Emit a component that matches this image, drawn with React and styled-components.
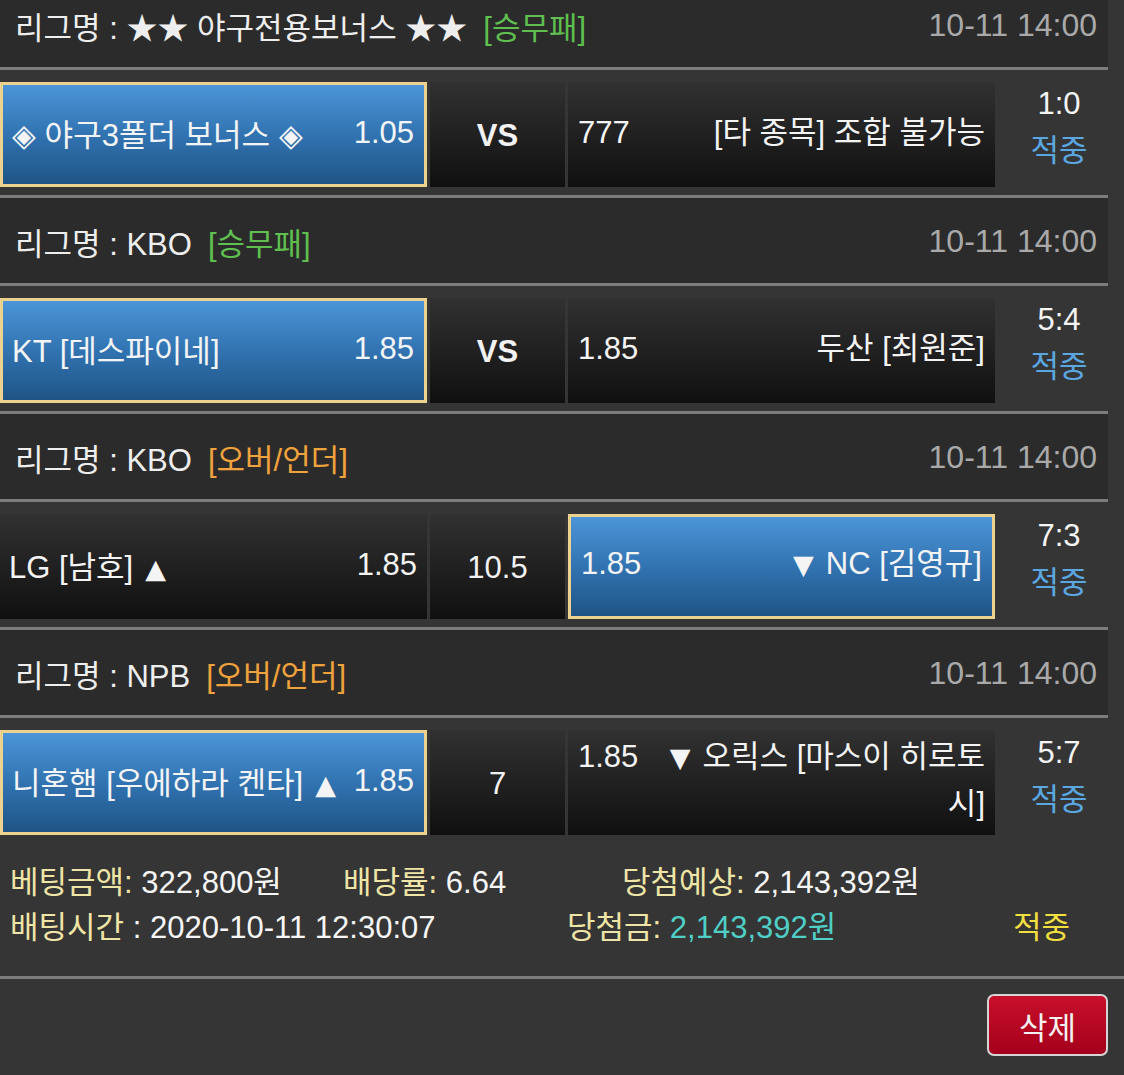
import styled, { createGlobalStyle } from "styled-components";

const GlobalStyle = createGlobalStyle`
  body {
    margin: 0;
    background: #353535;
    color: #f2f2f2;
    font-family: "Liberation Sans", "Noto Sans CJK KR", sans-serif;
    font-feature-settings: "palt";
  }
`;

const TAG_COLORS = {
  green: "#5fbf4f",
  orange: "#f0a23c",
};

// ou: over/under market, arrows drawn next to the names
const games = [
  {
    league: "★★ 야구전용보너스 ★★",
    tag: "승무패",
    tagColor: "green",
    time: "10-11 14:00",
    home: "◈ 야구3폴더 보너스 ◈",
    homeOdds: "1.05",
    mid: "VS",
    away: "[타 종목] 조합 불가능",
    awayOdds: "777",
    pick: "home",
    score: "1:0",
  },
  {
    league: "KBO",
    tag: "승무패",
    tagColor: "green",
    time: "10-11 14:00",
    home: "KT [데스파이네]",
    homeOdds: "1.85",
    mid: "VS",
    away: "두산 [최원준]",
    awayOdds: "1.85",
    pick: "home",
    score: "5:4",
  },
  {
    league: "KBO",
    tag: "오버/언더",
    tagColor: "orange",
    time: "10-11 14:00",
    home: "LG [남호]",
    homeOdds: "1.85",
    mid: "10.5",
    away: "NC [김영규]",
    awayOdds: "1.85",
    pick: "away",
    score: "7:3",
    ou: true,
  },
  {
    league: "NPB",
    tag: "오버/언더",
    tagColor: "orange",
    time: "10-11 14:00",
    home: "니혼햄 [우에하라 켄타]",
    homeOdds: "1.85",
    mid: "7",
    away: "오릭스 [마스이 히로토 시]",
    awayOdds: "1.85",
    pick: "home",
    score: "5:7",
    ou: true,
  },
];

const BetSlip = () => {
  return (
    <Wrapper>
      <GlobalStyle />
      <GameList>
        {games.map((game, i) => (
          <section key={i}>
            <LeagueBar>
              <span>
                리그명 : {game.league}
                <Tag $color={TAG_COLORS[game.tagColor]}>[{game.tag}]</Tag>
              </span>
              <Time>{game.time}</Time>
            </LeagueBar>
            <MatchRow $last={i === games.length - 1}>
              <HomeCell $picked={game.pick === "home"}>
                <span>
                  {game.home}
                  {game.ou && <Arrow $after>▲</Arrow>}
                </span>
                <span>{game.homeOdds}</span>
              </HomeCell>
              <MidCell $bold={game.mid === "VS"}>{game.mid}</MidCell>
              <AwayCell $picked={game.pick === "away"}>
                <AwayText>
                  <AwayOdds>{game.awayOdds}</AwayOdds>
                  {game.ou && <Arrow>▼</Arrow>}
                  {game.away}
                </AwayText>
              </AwayCell>
              <Score>
                <span>{game.score}</span>
                <Hit>적중</Hit>
              </Score>
            </MatchRow>
          </section>
        ))}
      </GameList>

      <Summary>
        <SummaryRow $cols="333px 279px 1fr">
          <span>
            <Label>베팅금액:</Label> 322,800원
          </span>
          <span>
            <Label>배당률:</Label> 6.64
          </span>
          <span>
            <Label>당첨예상:</Label> 2,143,392원
          </span>
        </SummaryRow>
        <SummaryRow $cols="557px 446px 1fr">
          <span>
            <Label>배팅시간</Label> : 2020-10-11 12:30:07
          </span>
          <span>
            <Label>당첨금:</Label> <Prize>2,143,392원</Prize>
          </span>
          <Result>적중</Result>
        </SummaryRow>
      </Summary>

      <Actions>
        <DeleteButton>삭제</DeleteButton>
      </Actions>
    </Wrapper>
  );
};

const Wrapper = styled.div`
  width: 1124px;
  overflow: hidden;
  font-size: 31px;
`;

const GameList = styled.div`
  width: 1108px;
  margin-top: -18px;
`;

const LeagueBar = styled.div`
  display: flex;
  align-items: center;
  justify-content: space-between;
  height: 88px;
  padding: 2px 11px 0 15px;
  box-sizing: border-box;
  background: #2b2b2b;
  border-bottom: 3px solid #7c7c7c;
  color: #eeeeee;
`;

const Tag = styled.span`
  margin-left: 16px;
  color: ${(p) => p.$color};
`;

const Time = styled.span`
  color: #a9a9a9;
  font-size: 32px;
`;

const MatchRow = styled.div`
  display: flex;
  gap: 3px;
  height: 128px;
  box-sizing: border-box;
  padding: 12px 0 8px;
  border-bottom: ${(p) => (p.$last ? "none" : "3px solid #7c7c7c")};
`;

const cellSkin = (p) =>
  p.$picked
    ? `background: linear-gradient(#4c95d8, #2f70ad 55%, #1f5485);
       border: 3px solid #ecd28e;`
    : `background: linear-gradient(#313131, #101010);`;

const HomeCell = styled.div`
  width: 427px;
  height: 105px;
  box-sizing: border-box;
  display: flex;
  align-items: center;
  justify-content: space-between;
  gap: 6px;
  padding: 0 10px 4px ${(p) => (p.$picked ? 9 : 9)}px;
  white-space: nowrap;
  color: #f4f4f4;
  ${cellSkin}
`;

const AwayCell = styled.div`
  width: 427px;
  height: 105px;
  box-sizing: border-box;
  display: flex;
  align-items: center;
  padding: 0 10px 4px;
  text-align: right;
  line-height: 46px;
  word-break: keep-all;
  color: #f4f4f4;
  ${cellSkin}
`;

const AwayText = styled.div`
  width: 100%;
`;

const AwayOdds = styled.span`
  float: left;
  margin-right: 12px;
`;

const Arrow = styled.span`
  font-family: "DejaVu Sans", sans-serif;
  font-size: 27px;
  margin: ${(p) => (p.$after ? "0 0 0 12px" : "0 12px 0 0")};
`;

const MidCell = styled.div`
  width: 135px;
  height: 105px;
  display: flex;
  align-items: center;
  justify-content: center;
  background: linear-gradient(#313131, #101010);
  font-weight: ${(p) => (p.$bold ? 700 : 400)};
  padding-top: 2px;
  box-sizing: border-box;
`;

const Score = styled.div`
  flex: 1;
  display: flex;
  flex-direction: column;
  align-items: center;
  justify-content: center;
  padding: 0 0 16px 12px;
  line-height: 47px;
  color: #f4f4f4;
`;

const Hit = styled.span`
  color: #5aa7e2;
`;

const Summary = styled.div`
  padding: 14px 0 26px;
  border-bottom: 3px solid #7c7c7c;
`;

const SummaryRow = styled.div`
  display: grid;
  grid-template-columns: ${(p) => p.$cols};
  padding-left: 10px;
  line-height: 45px;
  color: #f6f6f6;
`;

const Label = styled.span`
  color: #efe5a6;
`;

const Prize = styled.span`
  color: #4fcfc6;
`;

const Result = styled.span`
  color: #f1df3d;
`;

const Actions = styled.div`
  display: flex;
  justify-content: flex-end;
  padding: 15px 16px 0 0;
  height: 96px;
  box-sizing: border-box;
`;

const DeleteButton = styled.button`
  width: 121px;
  height: 62px;
  border: 2px solid #d4d4d4;
  border-radius: 7px;
  background: linear-gradient(#c80f2b, #a5001c);
  color: #f2f2f2;
  font-family: inherit;
  font-size: 31px;
  padding: 0;
`;

export default function App() {
  return <BetSlip />;
}
